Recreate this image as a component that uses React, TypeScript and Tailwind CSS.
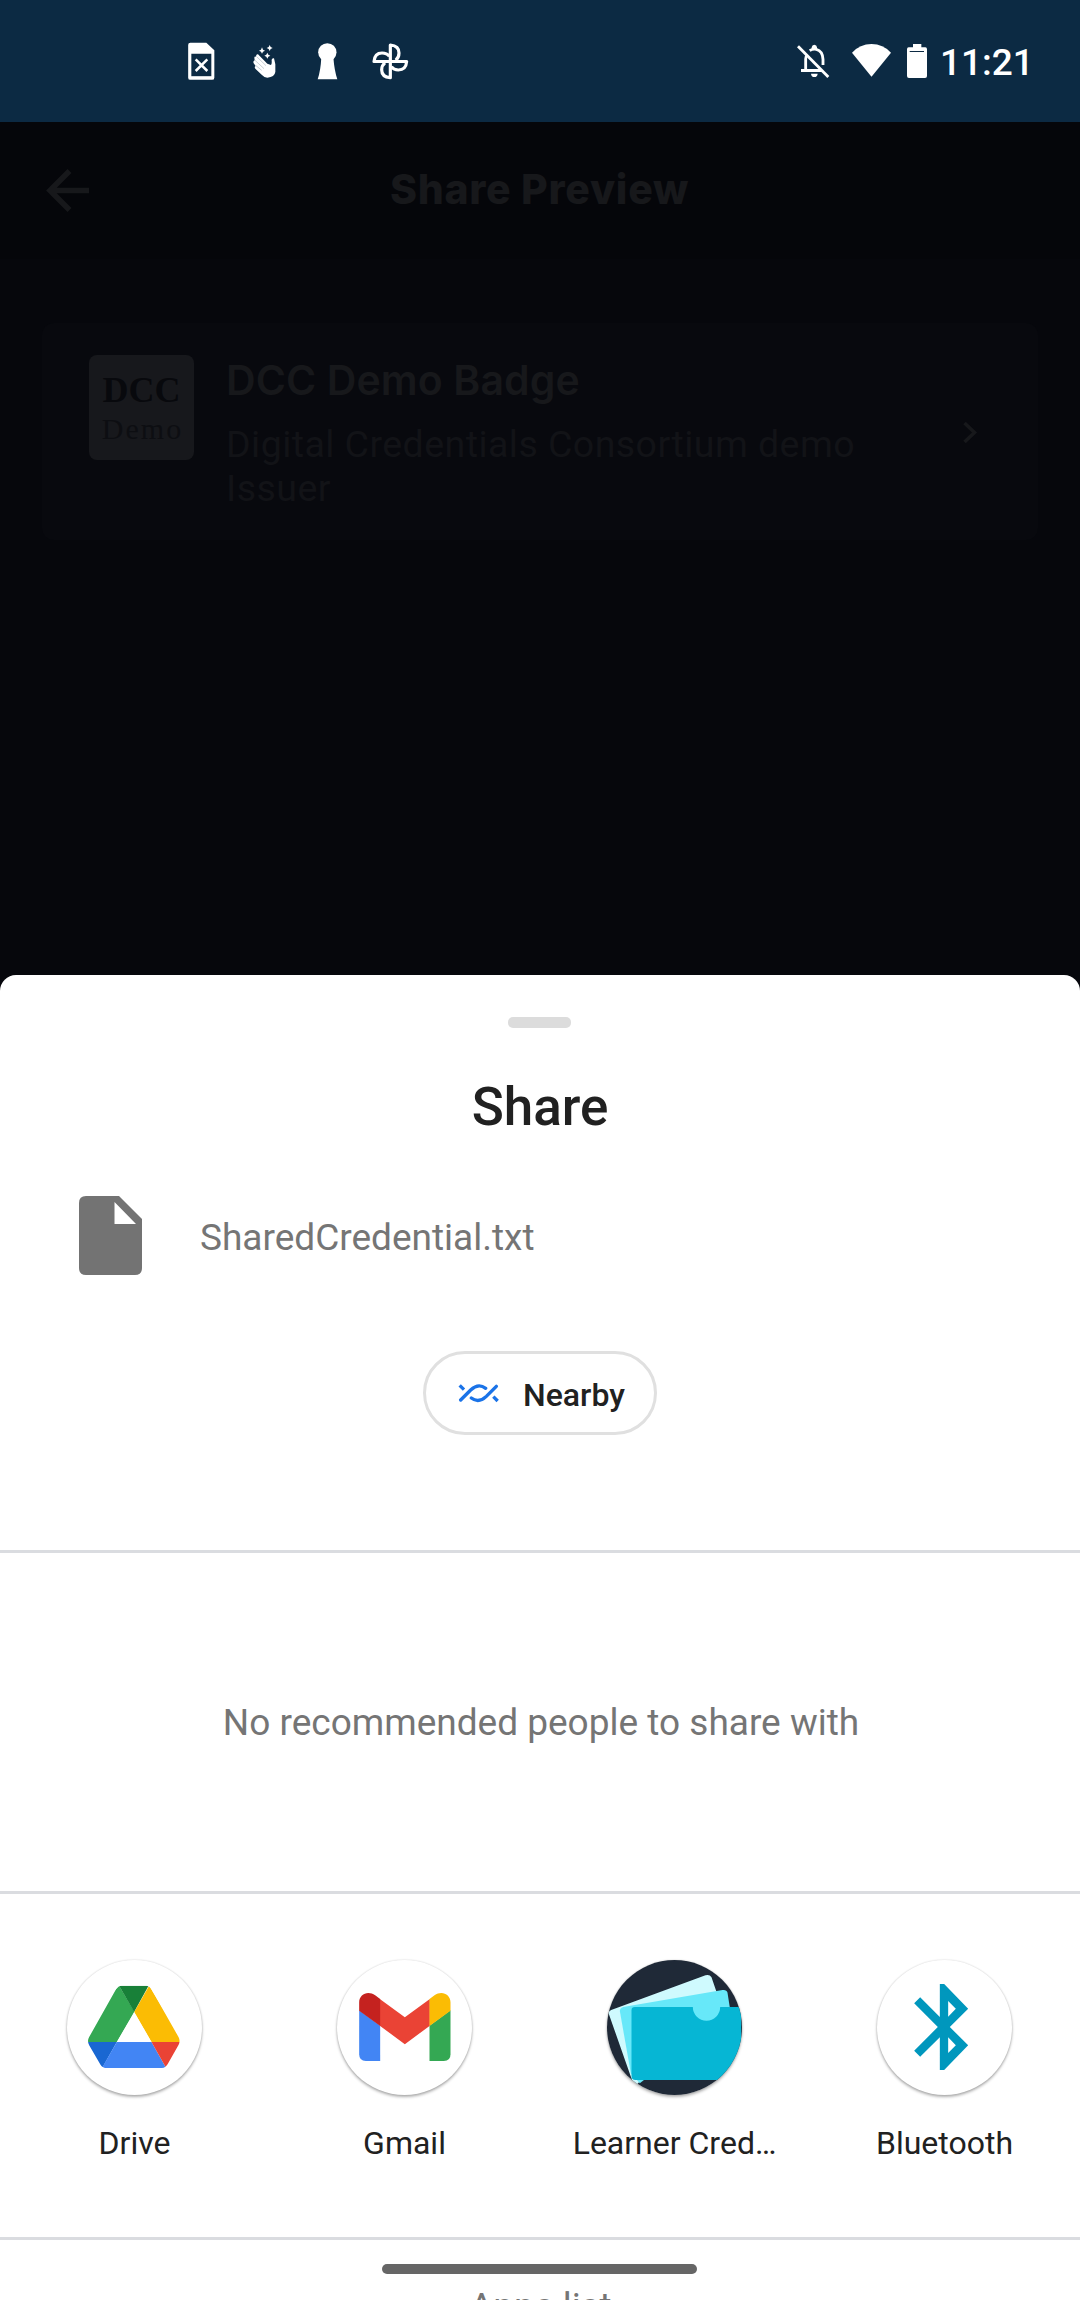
import React from "react";

function StatusBar() {
  return (
    <header className="flex h-[122px] items-start bg-[#0c2a43] pt-[42px] text-white">
      <svg className="ml-[188px] h-[38px] w-[27px]" viewBox="84 66 81 114">
        <path fillRule="evenodd" fill="#fff" d="M91 68.500H139L163 91V173Q163 179.500 156 179.500H91Q84.500 179.500 84.500 173V75Q84.500 68.500 91 68.500ZM94 101V169H154V101Z" />
        <path stroke="#fff" strokeWidth="7.500" d="M107 118L142 153M142 118L107 153" />
        <path stroke="#fff" strokeOpacity=".6" strokeWidth="2" d="M94 170.500H154" />
      </svg>
      <svg className="ml-[37px] h-[38px] w-[24px]" viewBox="276 66 72 114">
        <path fill="#fff" d="M294 103L322 131L333 135Q336 131 335 122Q334 114 342 115L346 133V156Q344 171 322 173Q312 172 305 164L286 146Q282 141 287 138L281 130Q278 124 284 121L283 113Q283 109 288 110L289 105Q291 102 294 103Z" />
        <path stroke="#0c2a43" strokeOpacity=".45" strokeWidth="1.500" d="M290 110L318 137M285 121L312 146M288 137L305 151" />
        <path fill="#fff" d="M306 82L309 89L315 92L309 95L306 101L303 95L297 92L303 89ZM329 75L332 81L338 84L332 87L329 93L326 87L320 84L326 81ZM322 98L325 104L331 107L325 110L322 116L319 110L313 107L319 104Z" />
      </svg>
      <svg className="ml-[41px] h-[38px] w-[21px]" viewBox="471 66 63 114">
        <circle cx="502" cy="97" r="27.500" fill="#fff" />
        <path fill="#fff" d="M484 111H520Q523 152 532 178H473Q482 152 484 111Z" />
      </svg>
      <svg className="ml-[34px] h-[38px] w-[37px]" viewBox="636 66 111 114">
        <g fill="none" stroke="#fff" strokeWidth="9.500" strokeLinejoin="round">
          <path d="M691 124.500V75Q717 77 717 99Q717 113 707 121" />
          <path d="M691 124.500H740Q738 150 715 150Q701 150 694 140" />
          <path d="M691 124.500V173Q665 171 665 149Q665 136 675 128" />
          <path d="M691 124.500H642Q644 99 666 99Q681 99 688 109" />
        </g>
      </svg>
      <svg className="ml-[387px] h-[38px] w-[34px]" viewBox="78 66 102 114">
        <g fill="none" stroke="#fff" strokeWidth="8.500">
          <path d="M84 79L175 171" />
          <path d="M93 151.500H156M107 151V117Q107 109 112 104M119 92Q128 86 139 88Q158 93 159 118V135" />
        </g>
        <path fill="#fff" d="M125 89V82Q126 74 133 74Q140 74 141 82V89ZM123 161H143Q142 171 133 171Q124 171 123 161Z" />
      </svg>
      <svg className="ml-[21px] h-[38px] w-[40px]" viewBox="243 66 120 114">
        <path fill="#fff" d="M304.500 170L246 98Q270 72 304.500 72Q339 72 363 98Z" />
      </svg>
      <svg className="ml-[15px] h-[38px] w-[22px]" viewBox="408 66 66 114">
        <path fill="#fff" fillRule="evenodd" d="M429 72H454V82H466Q471 82 471 88V168Q471 174 465 174H417Q411 174 411 168V88Q411 82 416 82H429ZM419 93V96H462V93Z" />
      </svg>
      <span className="ml-[12px] mt-[-1px] text-[37px] leading-[44px] font-medium">11:21</span>
    </header>
  );
}

function PreviewScreen() {
  return (
    <section className="h-[853px] bg-[#06070c] text-[#17181b]">
      <div className="flex h-[137px] items-start bg-[#05060a]">
        <svg className="ml-[46px] mt-[47px] h-[43px] w-[44px] flex-none" viewBox="0 0 44 43">
          <path fill="none" stroke="currentColor" strokeWidth="5.500" d="M23.500 2L4 21.500L23.500 41M4 21.500H43" />
        </svg>
        <h1 className="ml-[300px] mt-[42px] whitespace-nowrap font-['Inter'] text-[41px] leading-[50px] font-extrabold tracking-[0.7px]">Share Preview</h1>
      </div>
      <div className="mx-[42px] mt-[64px] flex h-[217px] items-start rounded-[12px] bg-[#08090e] pl-[47px] pt-[32px]">
        <div className="flex h-[105px] w-[105px] flex-none flex-col items-center rounded-[8px] bg-[#17181c] pt-[14px] font-['Liberation_Serif']">
          <span className="text-[36px] leading-[42px] font-bold text-[#08090d]">DCC</span>
          <span className="pl-[2px] text-[30px] leading-[36px] tracking-[2px] text-[#0d0e12]">Demo</span>
        </div>
        <div className="ml-[32px] w-[660px] flex-none">
          <h2 className="whitespace-nowrap font-['Inter'] text-[41px] leading-[50px] font-semibold tracking-[0.1px]">DCC Demo Badge</h2>
          <p className="mt-[17px] text-[37.500px] leading-[44px] tracking-[0.45px] text-[#121317]">Digital Credentials Consortium demo<br />Issuer</p>
        </div>
        <svg className="ml-[77px] mt-[66px] h-[23px] w-[15px] flex-none" viewBox="0 0 15 23">
          <path fill="none" stroke="currentColor" strokeWidth="3.500" d="M1.500 2L11.500 11.500L1.500 21" />
        </svg>
      </div>
    </section>
  );
}

function DriveIcon() {
  return (
    <svg className="size-full" viewBox="81.500 60 405 405">
      <clipPath id="drive-outline">
        <path d="M246 137H320Q328 137 333 145L416 291Q423 303 416 315L385 370Q378 384 366 384H202Q188 384 182 374L148 316Q141 303 148 291L229 147Q235 137 246 137Z" />
      </clipPath>
      <g clipPath="url(#drive-outline)">
        <path fill="#34a853" d="M238 137L284 216L231 306H130V250Z" />
        <path fill="#188038" d="M236 134H328L283 216Z" />
        <path fill="#fbbc04" d="M328 137L283 216L335 306H430Z" />
        <path fill="#1967d2" d="M140 306H231L186 386H140Z" />
        <path fill="#4285f4" d="M231 306H335L380 386H185Z" />
        <path fill="#ea4335" d="M335 306H425V386H380Z" />
        <path fill="#fff" d="M283 216L335 306H231Z" />
      </g>
    </svg>
  );
}

function GmailIcon() {
  return (
    <svg className="size-full" viewBox="891.500 60 405 405">
      <path fill="#4285f4" d="M958 211L1021 257V363H978Q958 363 958 343Z" />
      <path fill="#34a853" d="M1232 211L1169 257V363H1212Q1232 363 1232 343Z" />
      <path fill="#ea4335" d="M1020 177L1095 232L1170 177V257L1095 313L1020 257Z" />
      <path fill="#c5221f" d="M958 212V187C958 162 985 150 1006 166L1021 177V258Z" />
      <path fill="#fbbc04" d="M1232 212V187C1232 162 1205 150 1184 166L1169 177V258Z" />
    </svg>
  );
}

function WalletIcon() {
  return (
    <svg className="size-full rounded-full" viewBox="141.500 60 405 405">
      <path fill="#1f2937" d="M140 60H548V466H140Z" />
      <path fill="#cffafe" d="M154 210L437 106Q449 102 455 112L475 170L225 440L212 407L147 222Q145 213 154 210Z" />
      <path fill="#67e8f9" d="M190 201L488 150Q500 148 503 158L512 215L240 430L213 400L180 213Q180 204 190 201Z" />
      <path fill="#06b6d4" d="M225 201H399Q399 218 411 230Q423 242 440 242Q457 242 469 230Q481 218 481 201H533Q544 201 544 213V408Q544 420 532 420H227Q215 420 215 408V211Q215 201 225 201Z" />
    </svg>
  );
}

function BluetoothIcon() {
  return (
    <svg className="size-full" viewBox="951.500 60 405 405">
      <path fill="#0097bd" fillRule="evenodd" d="M1140 132H1153L1225 206L1170 261L1225 316L1153 390H1140V292L1081 350L1063 332L1134 261L1063 190L1081 172L1140 231ZM1165 183V230L1188 206ZM1165 292V339L1188 316Z" />
    </svg>
  );
}

const apps = [
  { name: "Drive", icon: <DriveIcon /> },
  { name: "Gmail", icon: <GmailIcon /> },
  { name: "Learner Cred…", icon: <WalletIcon /> },
  { name: "Bluetooth", icon: <BluetoothIcon /> },
];

function ShareSheet() {
  return (
    <div className="bg-[#06070c]">
      <section className="flex h-[1325px] flex-col items-center overflow-hidden rounded-t-[16px] bg-white text-[#212121]">
        <div className="mt-[42px] mr-px h-[11px] w-[63px] flex-none rounded-[5px] bg-[#dcdcdc]" />
        <h2 className="mt-[47px] text-[53px] leading-[64px] font-medium">Share</h2>
        <div className="mt-[57px] flex h-[79px] w-full flex-none items-center pl-[79px]">
          <svg className="h-[79px] w-[63px]" viewBox="0 0 63 79">
            <path fill="#737373" fillRule="evenodd" d="M7 0H40L63 23V72Q63 79 56 79H7Q0 79 0 72V7Q0 0 7 0ZM35.500 6V28H57Z" />
          </svg>
          <span className="ml-[58px] mt-[5px] text-[37px] text-[#757575]">SharedCredential.txt</span>
        </div>
        <button className="mt-[76px] flex h-[84px] w-[234px] flex-none items-center rounded-full border-[3px] border-[#e0e0e0] pl-[32px]">
          <svg className="h-[20px] w-[42px]" viewBox="174 157 126 60">
            <g fill="none" stroke="#1a73e8" strokeWidth="10">
              <path strokeLinecap="round" d="M182 208L212 178Q235 156 257 173" />
              <path strokeLinecap="round" d="M289 167L259 197Q236 219 214 202" />
              <path d="M179 164L192 177M280 198L293 211" strokeLinecap="butt" />
            </g>
          </svg>
          <span className="ml-[23px] mt-[3px] text-[32px] font-medium">Nearby</span>
        </button>
        <div className="mt-[115px] h-[3px] w-full flex-none bg-[#dadce0]" />
        <div className="flex h-[338px] w-full flex-none items-center justify-center">
          <p className="ml-[2px] mt-[2px] whitespace-nowrap text-[37px] text-[#757575]">No recommended people to share with</p>
        </div>
        <div className="h-[3px] w-full flex-none bg-[#dadce0]" />
        <div className="grid h-[343px] w-full flex-none grid-cols-4 pt-[66px]">
          {apps.map((app) => (
            <div key={app.name} className="flex flex-col items-center">
              <div className="mr-px size-[135px] rounded-full bg-white shadow-[0_2px_3px_rgba(0,0,0,0.3),0_0_2px_rgba(0,0,0,0.16)]">{app.icon}</div>
              <span className="mt-[28px] mr-px whitespace-nowrap text-[32px] leading-[40px]">{app.name}</span>
            </div>
          ))}
        </div>
        <div className="h-[3px] w-full flex-none bg-[#dadce0]" />
        <div className="mt-[24px] mr-px h-[10px] w-[315px] flex-none rounded-full bg-[#666]" />
        <p className="mt-[10px] ml-[1px] whitespace-nowrap text-[36.750px] leading-[46px] text-[#757575]">Apps list</p>
      </section>
    </div>
  );
}

export default function App() {
  return (
    <main className="h-[2300px] w-[1080px] overflow-hidden font-['Roboto',sans-serif]">
      <StatusBar />
      <PreviewScreen />
      <ShareSheet />
    </main>
  );
}
